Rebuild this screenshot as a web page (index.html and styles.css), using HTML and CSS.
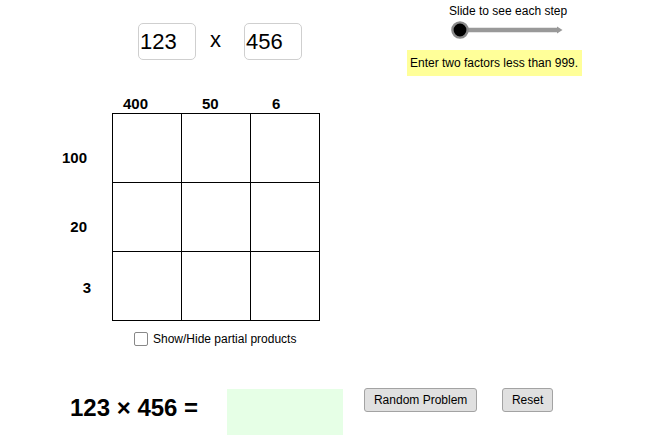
FILE: index.html
```html
<!DOCTYPE html>
<html lang="en">
<head>
<meta charset="utf-8">
<title>Area Model Multiplication</title>
<link rel="stylesheet" href="styles.css">
</head>
<body>
<div class="app">
  <div class="header">
    <div class="factors">
      <div class="factor">123</div>
      <div class="times">x</div>
      <div class="factor">456</div>
    </div>
    <div class="stepper">
      <div class="step-label">Slide to see each step</div>
      <svg class="slider" width="175" height="20" viewBox="0 0 175 20">
        <line x1="53" y1="10" x2="151" y2="10" stroke="#999" stroke-width="4.5"/>
        <polygon points="150,6.5 155.5,10 150,13.5" fill="#999"/>
        <circle cx="53" cy="10" r="7.6" fill="#000" stroke="#8a8a8a" stroke-width="2.4"/>
      </svg>
      <div class="hint">Enter two factors less than 999.</div>
    </div>
  </div>

  <div class="board">
    <div class="col-labels">
      <span class="col-label c1">400</span>
      <span class="col-label c2">50</span>
      <span class="col-label c3">6</span>
    </div>
    <div class="row-labels">
      <div class="row-label r1">100</div>
      <div class="row-label r2">20</div>
      <div class="row-label r3">3</div>
    </div>
    <div class="table">
      <div class="cell"></div><div class="cell"></div><div class="cell"></div>
      <div class="cell"></div><div class="cell"></div><div class="cell"></div>
      <div class="cell"></div><div class="cell"></div><div class="cell"></div>
    </div>
  </div>

  <label class="toggle">
    <span class="check"></span>
    <span class="toggle-text">Show/Hide partial products</span>
  </label>

  <div class="result">
    <div class="equation">123 × 456 =</div>
    <div class="answer"></div>
    <button class="btn btn-random">Random Problem</button>
    <button class="btn btn-reset">Reset</button>
  </div>
</div>
</body>
</html>
```

FILE: styles.css
```css
html, body {
  margin: 0;
  padding: 0;
  background: #fff;
}

.app {
  width: 650px;
  height: 440px;
  overflow: hidden;
  font-family: "Liberation Sans", Arial, sans-serif;
  color: #000;
}

/* ---------- header ---------- */
.header {
  display: flex;
  height: 95px;
}

.factors {
  display: flex;
  align-items: center;
  margin-left: 138px;
  margin-top: 23px;
  height: 37px;
}

.factor {
  box-sizing: border-box;
  width: 58px;
  height: 37px;
  border: 1px solid #cfcfcf;
  border-radius: 5px;
  font-size: 22px;
  line-height: 35px;
  padding-left: 1px;
}

.times {
  font-size: 22px;
  line-height: 26px;
  margin: -4px 23px 0 14px;
}

.stepper {
  margin-left: auto;
  margin-right: 68px;
  width: 175px;
  display: flex;
  flex-direction: column;
}

.step-label {
  font-size: 12px;
  line-height: 14px;
  margin-top: 4px;
  margin-left: 42px;
}

.slider {
  display: block;
  margin-top: 2px;
}

.hint {
  margin-top: 10px;
  height: 26px;
  background: #ffff99;
  font-size: 12px;
  line-height: 26px;
  padding-left: 3px;
}

/* ---------- board ---------- */
.board {
  display: grid;
  grid-template-columns: 112px 208px;
  grid-template-rows: 18px 208px;
}

.col-labels {
  grid-column: 2;
  grid-row: 1;
  display: grid;
  grid-template-columns: 69px 69px 69px;
}

.col-label,
.row-label {
  font-size: 15px;
  font-weight: bold;
  line-height: 17px;
}

.c1 { padding-left: 11px; }
.c2 { padding-left: 21px; }
.c3 { padding-left: 22px; }

.row-labels {
  grid-column: 1;
  grid-row: 2;
  display: grid;
  grid-template-rows: 69px 69px 69px;
}

.row-label {
  text-align: right;
  box-sizing: border-box;
}

.r1 { padding: 36px 25px 0 0; }
.r2 { padding: 36px 25px 0 0; }
.r3 { padding: 28px 21px 0 0; }

.table {
  grid-column: 2;
  grid-row: 2;
  display: grid;
  grid-template-columns: repeat(3, 69px);
  grid-template-rows: repeat(3, 69px);
  border-left: 1px solid #000;
  border-top: 1px solid #000;
  align-self: start;
  justify-self: start;
}

.cell {
  border-right: 1px solid #000;
  border-bottom: 1px solid #000;
}

/* ---------- toggle ---------- */
.toggle {
  display: flex;
  align-items: center;
  gap: 5px;
  margin-left: 134px;
  margin-top: 11px;
  width: max-content;
}

.check {
  box-sizing: border-box;
  width: 14px;
  height: 14px;
  border: 1px solid #888;
  border-radius: 2px;
  background: #fff;
}

.toggle-text {
  font-size: 12px;
  line-height: 14px;
}

/* ---------- result ---------- */
.result {
  display: flex;
  align-items: flex-start;
  margin-top: 42px;
}

.equation {
  margin-left: 70px;
  margin-top: 6px;
  font-size: 24px;
  font-weight: bold;
  line-height: 28px;
  white-space: nowrap;
}

.answer {
  margin-left: 29px;
  margin-top: 1px;
  width: 116px;
  height: 46px;
  background: #e6ffe6;
}

.btn {
  box-sizing: border-box;
  height: 24px;
  padding: 0;
  border: 1px solid #a3a3a3;
  border-radius: 3px;
  background: #e0e0e0;
  font-family: "Liberation Sans", Arial, sans-serif;
  font-size: 12px;
  color: #000;
}

.btn-random {
  margin-left: 21px;
  width: 113px;
}

.btn-reset {
  margin-left: 25px;
  width: 51px;
}
```
